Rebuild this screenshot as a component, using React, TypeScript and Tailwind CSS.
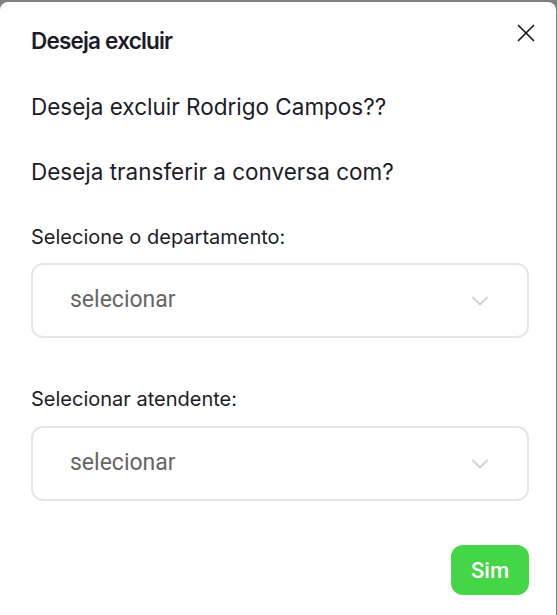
import { X, ChevronDown } from 'lucide-react';

const SelectBox = () => {
  return (
    <div className="flex h-[75px] items-center justify-between rounded-xl border-2 border-[#e6e6e6] bg-white pl-[37px] pr-[33px]">
      <span className="text-[23px] text-[#666666] font-['Roboto',sans-serif]">selecionar</span>
      <ChevronDown className="h-[28px] w-[28px] text-[#d4d4d4]" strokeWidth={1.75} />
    </div>
  );
};

export default function App() {
  return (
    <div className="h-[615px] w-[557px] overflow-hidden bg-[#7f7f7f] pt-[2px] pr-[1px] font-['Inter',sans-serif] text-[#1c1c28]">
      <div className="relative flex h-[620px] flex-col rounded-lg bg-white pl-[31px] pr-[27px] pt-[24px]">
        <button className="absolute right-[15px] top-[16px] text-[#1c1c28]">
          <X className="h-[30px] w-[30px]" strokeWidth={1.4} />
        </button>

        <h2 className="text-[22.5px] leading-[30px] font-semibold tracking-[-0.8px]">Deseja excluir</h2>

        <p className="mt-[36px] text-[22.5px] leading-[30px]">Deseja excluir Rodrigo Campos??</p>
        <p className="mt-[35px] text-[22.5px] leading-[30px]">Deseja transferir a conversa com?</p>

        <label className="mt-[37px] text-[20px] leading-[26px]">Selecione o departamento:</label>
        <div className="mt-[13px]">
          <SelectBox />
        </div>

        <label className="mt-[48px] text-[20px] leading-[26px]">Selecionar atendente:</label>
        <div className="mt-[14px]">
          <SelectBox />
        </div>

        <div className="mt-[44px] flex justify-end">
          <button className="h-[50px] w-[78px] rounded-xl bg-[#44d646] text-[22px] font-medium text-white font-['Roboto',sans-serif]">
            Sim
          </button>
        </div>
      </div>
    </div>
  );
}
